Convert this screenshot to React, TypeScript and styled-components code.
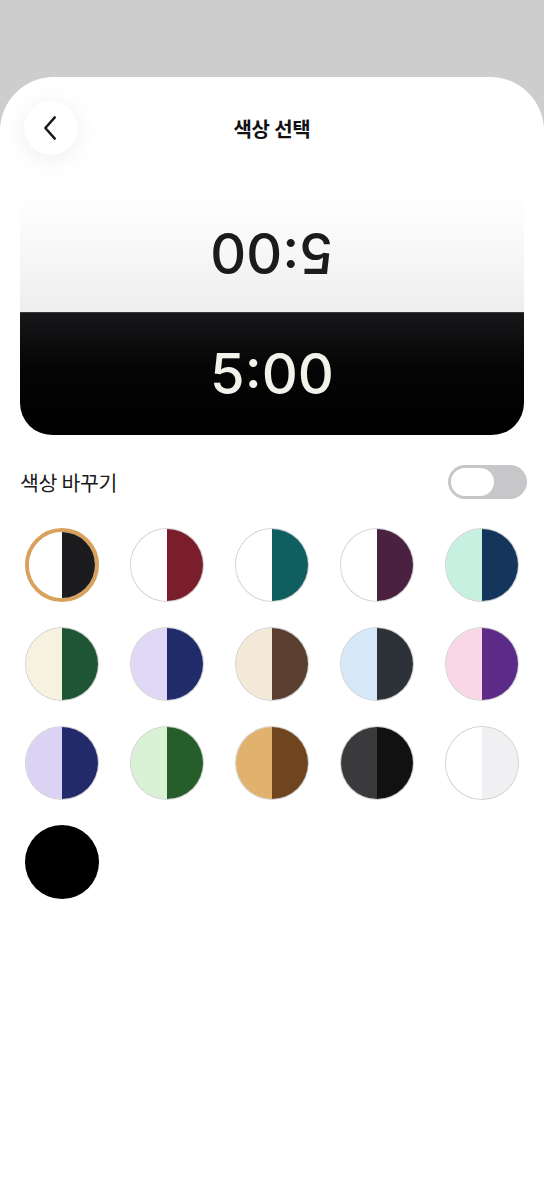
import styled, { createGlobalStyle } from "styled-components";
import { useState } from "react";

type Swatch = { left: string; right: string };

const swatches: Swatch[] = [
  { left: "#ffffff", right: "#1c1c1e" },
  { left: "#ffffff", right: "#7a1e2c" },
  { left: "#ffffff", right: "#0f5e60" },
  { left: "#ffffff", right: "#4a2140" },
  { left: "#c6f0df", right: "#14365c" },
  { left: "#f7f2df", right: "#1d5535" },
  { left: "#e0d8f6", right: "#1f2c69" },
  { left: "#f4e9d7", right: "#5a3f2f" },
  { left: "#d6e8f7", right: "#2d3238" },
  { left: "#f9d7e6", right: "#5c2a87" },
  { left: "#dcd3f4", right: "#232a6b" },
  { left: "#d9f1d4", right: "#255e2a" },
  { left: "#e0b26e", right: "#6f4520" },
  { left: "#3a3a3c", right: "#111111" },
  { left: "#ffffff", right: "#f0f0f3" },
  { left: "#000000", right: "#000000" },
];

const App = () => {
  const [selected, setSelected] = useState(0);
  const [on, setOn] = useState(false);

  return (
    <>
      <GlobalStyle />
      <Page>
        <Sheet>
          <Header>
            <BackButton aria-label="뒤로">
              <svg width="30" height="30" viewBox="0 0 24 24" fill="none">
                <path
                  d="M15 3.5 L7.5 12 L15 20.5"
                  stroke="#1a1a1a"
                  strokeWidth="2"
                  strokeLinecap="round"
                  strokeLinejoin="round"
                />
              </svg>
            </BackButton>
            <Title>색상 선택</Title>
            <span />
          </Header>

          <Clock>
            <ClockHalf $light>
              <Time $light>5:00</Time>
            </ClockHalf>
            <ClockHalf>
              <Time>5:00</Time>
            </ClockHalf>
          </Clock>

          <SettingRow>
            <Label>색상 바꾸기</Label>
            <Toggle $on={on} onClick={() => setOn(!on)}>
              <Knob $on={on} />
            </Toggle>
          </SettingRow>

          <SwatchGrid>
            {swatches.map((s, i) => (
              <SwatchButton
                key={i}
                $selected={i === selected}
                $dark={s.left === "#000000"}
                onClick={() => setSelected(i)}
              >
                <SwatchHalf style={{ background: s.left }} />
                <SwatchHalf style={{ background: s.right }} />
              </SwatchButton>
            ))}
          </SwatchGrid>
        </Sheet>
      </Page>
    </>
  );
};

const GlobalStyle = createGlobalStyle`
  html, body {
    margin: 0;
    padding: 0;
    background: #cdcdcd;
    font-family: "Noto Sans CJK KR", "Noto Sans", sans-serif;
  }
  * {
    box-sizing: border-box;
  }
`;

const Page = styled.div`
  min-height: 1182px;
  padding-top: 77px;
  background: #cdcdcd;
  display: flex;
  flex-direction: column;
`;

const Sheet = styled.div`
  flex: 1;
  background: #ffffff;
  border-radius: 54px 54px 0 0;
  display: flex;
  flex-direction: column;
  padding: 24px 20px 0;
`;

const Header = styled.div`
  display: grid;
  grid-template-columns: 54px 1fr 54px;
  align-items: center;
  padding-left: 4px;
  padding-right: 4px;
`;

const BackButton = styled.button`
  width: 54px;
  height: 54px;
  border-radius: 50%;
  border: none;
  background: #ffffff;
  box-shadow: 0 4px 24px rgba(0, 0, 0, 0.07);
  display: flex;
  align-items: center;
  justify-content: center;
  padding: 0;
  cursor: pointer;
`;

const Title = styled.div`
  text-align: center;
  font-size: 20px;
  font-weight: 700;
  color: #111111;
  letter-spacing: -0.2px;
`;

const Clock = styled.div`
  margin-top: 40px;
  border-radius: 4px 4px 32px 32px;
  overflow: hidden;
  display: flex;
  flex-direction: column;
`;

const ClockHalf = styled.div<{ $light?: boolean }>`
  height: ${(p) => (p.$light ? "117px" : "123px")};
  display: flex;
  align-items: center;
  justify-content: center;
  background: ${(p) =>
    p.$light
      ? "linear-gradient(180deg, #ffffff 0%, #f8f8f8 45%, #eeeeef 100%)"
      : "linear-gradient(180deg, #17171a 0%, #050505 45%, #000000 100%)"};
  border-top: ${(p) => (p.$light ? "none" : "1px solid #3a3a3c")};
`;

const Time = styled.div<{ $light?: boolean }>`
  font-family: Inter, "Noto Sans", sans-serif;
  font-size: 56px;
  font-weight: 500;
  line-height: 1;
  color: ${(p) => (p.$light ? "#1b1b1b" : "#f2f1ea")};
  transform: ${(p) => (p.$light ? "rotate(180deg)" : "none")};
  margin-top: ${(p) => (p.$light ? "-2px" : "0")};
`;

const SettingRow = styled.div`
  margin-top: 30px;
  display: flex;
  align-items: center;
  justify-content: space-between;
  height: 34px;
`;

const Label = styled.div`
  font-size: 20.5px;
  color: #1a1a1a;
  letter-spacing: -0.3px;
`;

const Toggle = styled.div<{ $on: boolean }>`
  width: 79px;
  height: 34px;
  margin-right: -3px;
  border-radius: 17px;
  background: ${(p) => (p.$on ? "#d4a25a" : "#c7c7c9")};
  display: flex;
  justify-content: ${(p) => (p.$on ? "flex-end" : "flex-start")};
  padding: 1px;
  cursor: pointer;
`;

const Knob = styled.div<{ $on: boolean }>`
  width: 47px;
  height: 32px;
  border-radius: 16px;
  background: #ffffff;
  border: 2px solid #c7c7c9;
`;

const SwatchGrid = styled.div`
  margin-top: 29px;
  padding-left: 5px;
  display: grid;
  grid-template-columns: repeat(5, 74px);
  column-gap: 31px;
  row-gap: 25px;
`;

const SwatchButton = styled.button<{ $selected: boolean; $dark?: boolean }>`
  width: 74px;
  height: 74px;
  border-radius: 50%;
  padding: 0;
  overflow: hidden;
  display: flex;
  cursor: pointer;
  border: ${(p) =>
    p.$selected
      ? "4px solid #d8a25c"
      : p.$dark
      ? "none"
      : "1px solid rgba(0, 0, 0, 0.12)"};
`;

const SwatchHalf = styled.div`
  flex: 1;
  height: 100%;
`;

export default App;
